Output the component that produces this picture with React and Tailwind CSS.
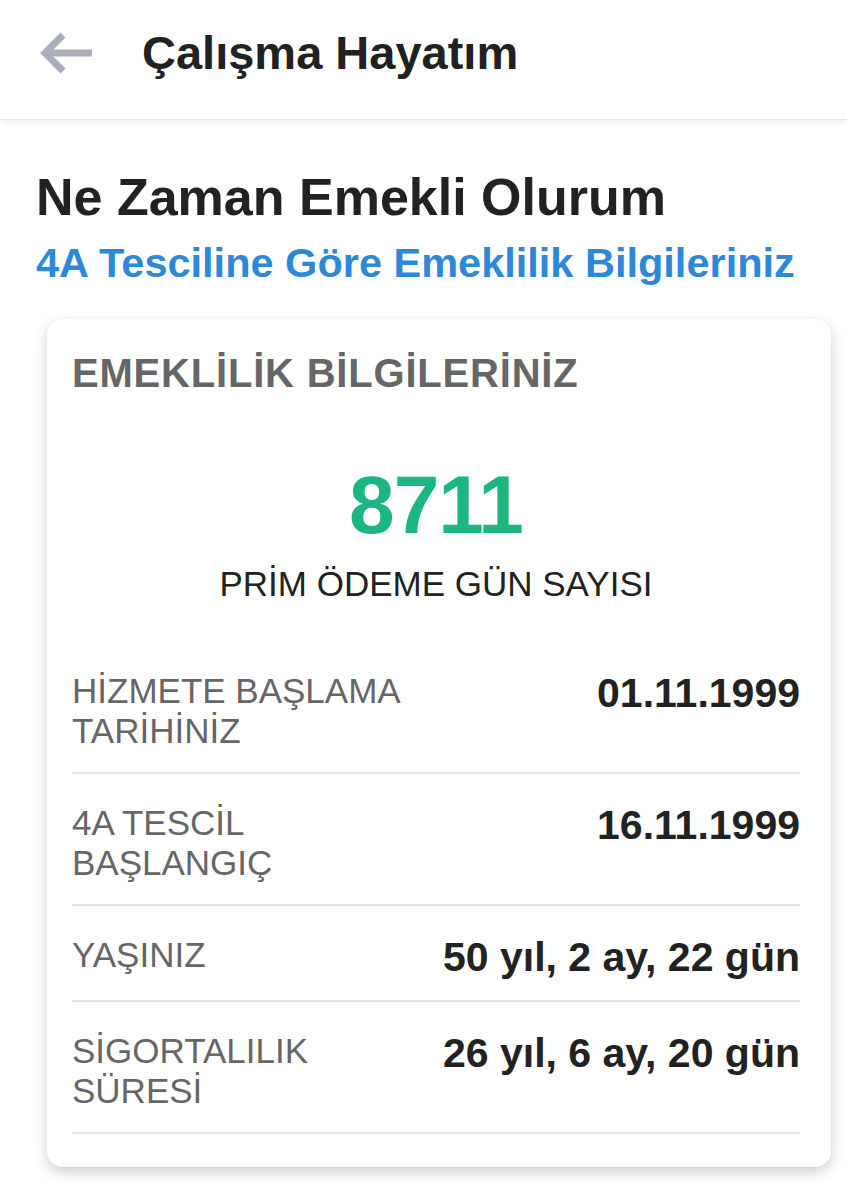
import React from "react";

const rows = [
  { label: ["HİZMETE BAŞLAMA", "TARİHİNİZ"], value: "01.11.1999" },
  { label: ["4A TESCİL", "BAŞLANGIÇ"], value: "16.11.1999" },
  { label: ["YAŞINIZ"], value: "50 yıl, 2 ay, 22 gün" },
  { label: ["SİGORTALILIK", "SÜRESİ"], value: "26 yıl, 6 ay, 20 gün" },
];

const BackArrow = () => (
  <svg width="56" height="48" viewBox="0 0 56 48" fill="none">
    <path
      d="M54 24H8M25 6L7 24l18 18"
      stroke="#aaadbb"
      strokeWidth="7"
      strokeLinejoin="miter"
    />
  </svg>
);

export default function App() {
  return (
    <div className="min-h-screen bg-white font-['Liberation_Sans',Arial,sans-serif]">
      <header className="h-[120px] bg-white border-b border-[#e6e6e6] shadow-[0_3px_6px_rgba(0,0,0,0.06)] flex items-start pt-[27px]">
        <div className="flex items-center h-[52px]">
          <div className="ml-[38px] w-[56px] flex items-center">
            <BackArrow />
          </div>
          <h1 className="ml-[48px] text-[47px] leading-[52px] font-bold text-[#212121]">
            Çalışma Hayatım
          </h1>
        </div>
      </header>

      <main className="pt-[47px]">
        <div className="pl-[36px]">
          <h2 className="text-[52px] leading-[60px] font-bold text-[#222]">
            Ne Zaman Emekli Olurum
          </h2>
          <p className="mt-[12px] text-[41.5px] leading-[48px] font-bold text-[#2e88d8]">
            4A Tesciline Göre Emeklilik Bilgileriniz
          </p>
        </div>

        <section className="mt-[32px] ml-[47px] mr-[16px] bg-white rounded-[16px] shadow-[0_5px_14px_rgba(0,0,0,0.2)] pt-[32px] pb-[33px] pl-[25px] pr-[31px]">
          <h3 className="text-[40px] leading-[44px] font-bold text-[#666] tracking-[0.8px]">
            EMEKLİLİK BİLGİLERİNİZ
          </h3>

          <div className="mt-[69px] flex flex-col items-center">
            <div className="text-[82px] leading-none font-bold text-[#1cb77e] tracking-[-1px]">
              8711
            </div>
            <div className="mt-[18px] text-[35px] leading-[40px] text-[#222]">
              PRİM ÖDEME GÜN SAYISI
            </div>
          </div>

          <div className="mt-[38px]">
            {rows.map((r) => (
              <div
                key={r.value}
                className="flex justify-between items-start gap-4 pt-[29px] pb-[21px] border-b-2 border-[#e3e3e3]"
              >
                <div className="text-[35px] leading-[40px] text-[#666]">
                  {r.label.map((l) => (
                    <div key={l}>{l}</div>
                  ))}
                </div>
                <div className="text-[41px] leading-[44px] font-bold text-[#222] whitespace-nowrap">
                  {r.value}
                </div>
              </div>
            ))}
          </div>
        </section>
      </main>
    </div>
  );
}
